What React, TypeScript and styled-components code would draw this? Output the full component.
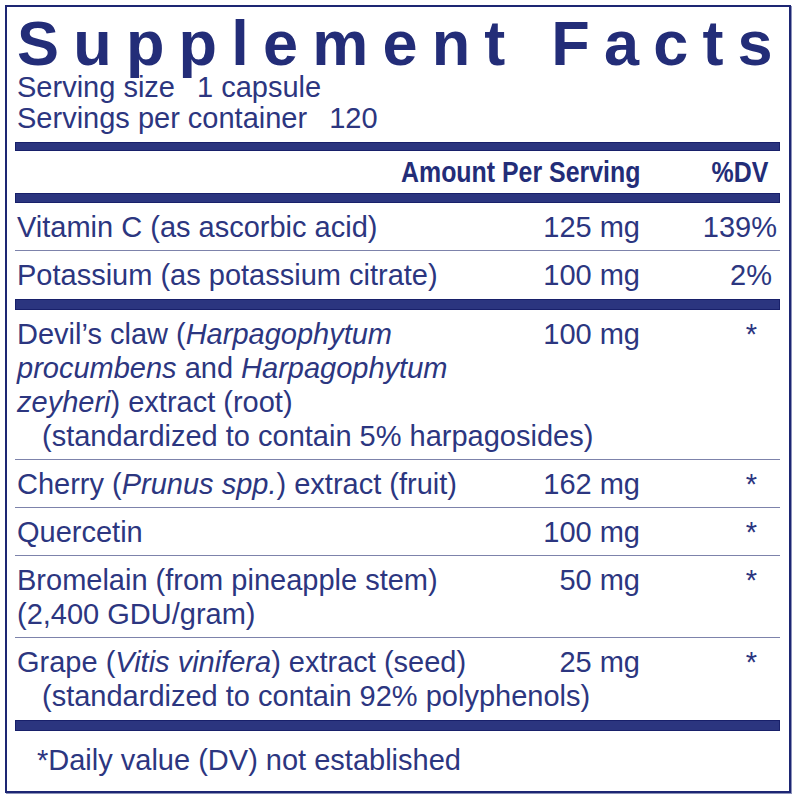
import React from 'react';
import styled, {createGlobalStyle} from 'styled-components';

const navy = '#2c3680';

const GlobalStyle = createGlobalStyle`
  html, body {
    margin: 0;
    padding: 0;
    background: #ffffff;
  }
  body {
    font-family: "Liberation Sans", Arial, sans-serif;
    color: ${navy};
  }
`;

type Ingredient = {
  label: React.ReactNode;
  note?: string;
  amount: string;
  dv: string;
  dvPad: number;
};

const vitamins: Ingredient[] = [
  {label: 'Vitamin C (as ascorbic acid)', amount: '125 mg', dv: '139%', dvPad: 3},
  {label: 'Potassium (as potassium citrate)', amount: '100 mg', dv: '2%', dvPad: 8},
];

const botanicals: Ingredient[] = [
  {
    label: (
      <>
        Devil’s claw (<i>Harpagophytum</i>
        <br />
        <i>procumbens</i> and <i>Harpagophytum</i>
        <br />
        <i>zeyheri</i>) extract (root)
      </>
    ),
    note: '(standardized to contain 5% harpagosides)',
    amount: '100 mg',
    dv: '*',
    dvPad: 23,
  },
  {
    label: (
      <>
        Cherry (<i>Prunus spp.</i>) extract (fruit)
      </>
    ),
    amount: '162 mg',
    dv: '*',
    dvPad: 23,
  },
  {label: 'Quercetin', amount: '100 mg', dv: '*', dvPad: 23},
  {
    label: (
      <>
        Bromelain (from pineapple stem)
        <br />
        (2,400 GDU/gram)
      </>
    ),
    amount: '50 mg',
    dv: '*',
    dvPad: 23,
  },
  {
    label: (
      <>
        Grape (<i>Vitis vinifera</i>) extract (seed)
      </>
    ),
    note: '(standardized to contain 92% polyphenols)',
    amount: '25 mg',
    dv: '*',
    dvPad: 23,
  },
];

const IngredientRows = ({items}: {items: Ingredient[]}) => (
  <>
    {items.map((item, i) => (
      <Row key={i} $divider={i > 0} $last={i === items.length - 1}>
        <Label>{item.label}</Label>
        <Amount>{item.amount}</Amount>
        <Dv $pad={item.dvPad}>{item.dv}</Dv>
        {item.note && <Note>{item.note}</Note>}
      </Row>
    ))}
  </>
);

export default function App() {
  return (
    <>
      <GlobalStyle />
      <Page>
        <Panel>
          <Title>Supplement Facts</Title>
          <Serving>
            Serving size<Gap />1 capsule
          </Serving>
          <Serving>
            Servings per container<Gap />120
          </Serving>
          <Bar $size={9} $top={8} />
          <HeaderRow>
            <HeaderAmount>
              <Condensed>Amount Per Serving</Condensed>
            </HeaderAmount>
            <HeaderDv>
              <Condensed>%DV</Condensed>
            </HeaderDv>
          </HeaderRow>
          <Bar $size={10} />
          <IngredientRows items={vitamins} />
          <Bar $size={11} />
          <IngredientRows items={botanicals} />
          <Bar $size={11} />
          <Footer>*Daily value (DV) not established</Footer>
        </Panel>
      </Page>
    </>
  );
}

const Page = styled.div`
  padding: 5px;
  width: 800px;
  height: 798px;
  box-sizing: border-box;
`;

const Panel = styled.div`
  box-sizing: border-box;
  width: 786px;
  border: 2px solid #1d2673;
  box-shadow: 1px 1px 0 #8d93bb;
  padding: 7px 9px 0 8px;
  display: flex;
  flex-direction: column;
`;

const Title = styled.h1`
  margin: 0 0 0 2px;
  font-family: "Liberation Sans", Arial, sans-serif;
  font-weight: 700;
  font-size: 63px;
  line-height: 58px;
  letter-spacing: 14.2px;
  color: #232d78;
  white-space: nowrap;
`;

const Serving = styled.div`
  padding-left: 2px;
  font-size: 29px;
  line-height: 31px;
  white-space: nowrap;
`;

const Gap = styled.span`
  display: inline-block;
  width: 22px;
`;

const Bar = styled.div<{$size: number; $top?: number}>`
  height: ${(p) => p.$size}px;
  margin-top: ${(p) => p.$top ?? 0}px;
  box-sizing: border-box;
  background: #2b357f;
  border: 1px solid #18206a;
`;

const Grid = styled.div`
  display: grid;
  grid-template-columns: 1fr 100px 140px;
`;

const HeaderRow = styled(Grid)`
  padding: 4px 0;
  font-family: "Liberation Sans", Arial, sans-serif;
  font-weight: 700;
  font-size: 30px;
  line-height: 34px;
  color: #232d78;
`;

const Condensed = styled.span`
  display: inline-block;
  transform: scaleX(0.83);
  transform-origin: right center;
  white-space: nowrap;
`;

const HeaderAmount = styled.div`
  grid-column: 1 / 3;
  text-align: right;
`;

const HeaderDv = styled.div`
  text-align: right;
  padding-right: 12px;
`;

const Row = styled(Grid)<{$divider: boolean; $last: boolean}>`
  padding: 7px 0 ${(p) => (p.$last ? 7 : 6)}px;
  border-top: ${(p) => (p.$divider ? '1px solid #7d83ab' : 'none')};
  font-size: 29px;
  line-height: 34px;
`;

const Label = styled.div`
  padding-left: 2px;
  white-space: nowrap;
`;

const Amount = styled.div`
  text-align: right;
  white-space: nowrap;
`;

const Dv = styled.div<{$pad: number}>`
  text-align: right;
  padding-right: ${(p) => p.$pad}px;
`;

const Note = styled.div`
  grid-column: 1 / -1;
  padding-left: 27px;
  white-space: nowrap;
`;

const Footer = styled.div`
  padding: 12px 0 14px 22px;
  font-size: 29px;
  line-height: 34px;
`;
